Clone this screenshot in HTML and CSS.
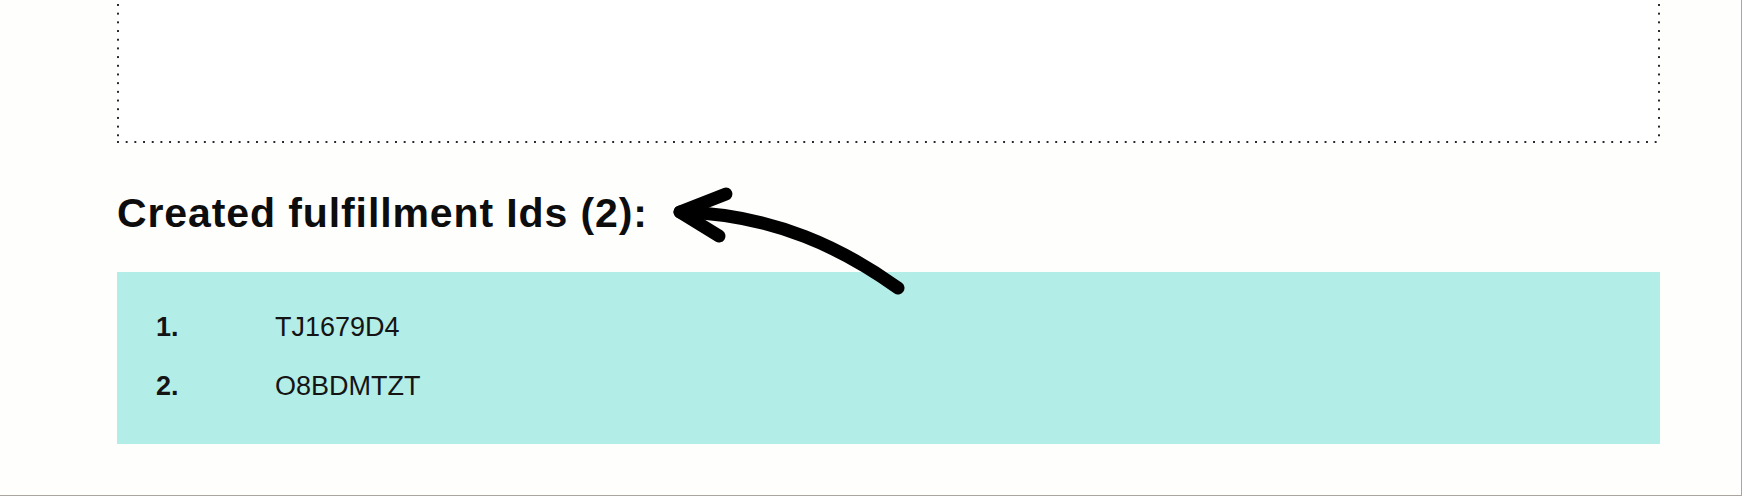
FILE: index.html
```html
<!DOCTYPE html>
<html lang="en">
<head>
    <meta charset="UTF-8">
    <meta name="viewport" content="width=device-width, initial-scale=1.0">
    <title>Created fulfillment Ids</title>
    <link rel="stylesheet" href="styles.css">
</head>
<body>
    <div class="page">
        <div class="content">
            <!-- Drop area (scrolled, only its lower part shows) -->
            <div class="drop-box"></div>

            <h2 class="ids-title">Created fulfillment Ids (2):</h2>

            <ol class="ids-list">
                <li><span class="num">1.</span><span class="id">TJ1679D4</span></li>
                <li><span class="num">2.</span><span class="id">O8BDMTZT</span></li>
            </ol>
        </div>

        <!-- Hand drawn arrow pointing at the title -->
        <svg class="arrow" width="1742" height="496" viewBox="0 0 1742 496">
            <path d="M898 288 C 845 250, 775 214, 680 212" />
            <path d="M726 194 L 680 212 L 719 236" />
        </svg>
    </div>
</body>
</html>
```

FILE: styles.css
```css
body {
    margin: 0;
    font-family: "Liberation Sans", Arial, sans-serif;
    background-color: #fefefd;
}

.page {
    position: relative;
    width: 1742px;
    height: 496px;
    box-sizing: border-box;
    border-right: 1px solid #aaa59f;
    border-bottom: 1px solid #aaa59f;
    padding-left: 117px;
    overflow: hidden;
}

.content {
    width: 1543px;
}

.drop-box {
    height: 143px;
    background-color: #fff;
    background-image:
        linear-gradient(to bottom, #28282c 2.4px, transparent 2.4px),
        linear-gradient(to bottom, #28282c 2.4px, transparent 2.4px),
        linear-gradient(to right, #28282c 2.4px, transparent 2.4px);
    background-position: left bottom, right bottom, left bottom;
    background-size: 2.4px 8.7px, 2.4px 8.7px, 8.7px 2.4px;
    background-repeat: repeat-y, repeat-y, repeat-x;
}

.ids-title {
    margin: 47px 0 36px;
    font-size: 41px;
    line-height: 46px;
    font-weight: bold;
    letter-spacing: 0.9px;
    color: #0d0d0d;
}

.ids-list {
    list-style: none;
    margin: 0;
    padding: 26px 0 28px 39px;
    background-color: #b3ede7;
}

.ids-list li {
    display: grid;
    grid-template-columns: 119px auto;
    font-size: 27px;
    line-height: 59px;
    color: #141414;
}

.num {
    font-weight: bold;
}

.arrow {
    position: absolute;
    top: 0;
    left: 0;
    pointer-events: none;
}

.arrow path {
    fill: none;
    stroke: #000;
    stroke-width: 13;
    stroke-linecap: round;
    stroke-linejoin: round;
}
```
